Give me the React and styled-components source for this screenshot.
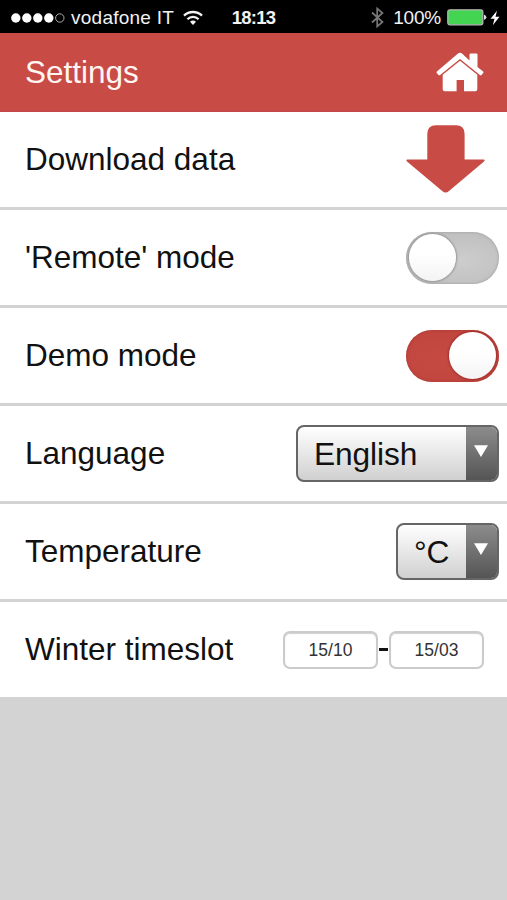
import React, { useState } from 'react';
import styled, { createGlobalStyle } from 'styled-components';

const GlobalStyle = createGlobalStyle`
  * {
    box-sizing: border-box;
  }

  body {
    margin: 0;
    background: #d3d3d3;
    font-family: 'Liberation Sans', Arial, sans-serif;
  }
`;

const Page = styled.div`
  height: 900px;
  overflow: hidden;
  background: #d3d3d3;
`;

const StatusBar = styled.div`
  display: grid;
  grid-template-columns: 1fr auto 1fr;
  align-items: center;
  height: 33px;
  padding: 2px 7px 0 11px;
  background: #000;
  color: #f2f2f2;
  font-size: 19px;
  line-height: 22px;
`;

const StatusGroup = styled.div`
  display: flex;
  align-items: center;
  justify-content: ${({ $end }) => ($end ? 'flex-end' : 'flex-start')};
`;

const Carrier = styled.span`
  margin: 0 9px 0 6px;
  letter-spacing: 0.25px;
`;

const Clock = styled.span`
  margin-right: 4px;
  font-weight: 700;
  font-size: 18.5px;
  letter-spacing: -0.8px;
`;

const Percent = styled.span`
  margin: 0 6px 0 9px;
  letter-spacing: -0.2px;
`;

const Header = styled.header`
  display: flex;
  align-items: center;
  justify-content: space-between;
  height: 79px;
  padding: 0 23px 0 25px;
  background: #c84b45;
  border-bottom: 1px solid #c5474a;
`;

const Title = styled.h1`
  margin: 0;
  font-size: 31.5px;
  font-weight: 400;
  color: #fff5f2;
`;

const List = styled.div`
  background: #fff;
`;

const Row = styled.div`
  display: flex;
  align-items: center;
  justify-content: space-between;
  height: 98px;
  padding: 0 ${({ $right }) => $right || 8}px 0 25px;
  border-bottom: 3px solid #d3d3d3;
`;

const Label = styled.span`
  font-size: 31.5px;
  color: #111;
`;

const Switch = styled.button`
  display: flex;
  align-items: center;
  justify-content: ${({ $on }) => ($on ? 'flex-end' : 'flex-start')};
  width: 93px;
  height: 52px;
  padding: 0 3px;
  border: 0;
  border-radius: 26px;
  background: ${({ $on }) =>
    $on
      ? 'radial-gradient(ellipse at 40% 55%, #c64a42, #bd443d)'
      : 'radial-gradient(ellipse at 60% 55%, #cdcdcd, #bababa)'};
  box-shadow: inset 0 0 3px ${({ $on }) => ($on ? '#a93732' : '#9b9b9b')};
`;

const Knob = styled.span`
  width: 47px;
  height: 47px;
  border-radius: 50%;
  background: linear-gradient(#fff 40%, #f4f4f4);
  box-shadow: 0 0 2px 1px ${({ $on }) => ($on ? '#a02f2b' : '#959595')};
`;

const Select = styled.div`
  display: flex;
  width: ${({ $width }) => $width}px;
  height: 57px;
  border: 2px solid #666;
  border-radius: 8px;
  overflow: hidden;
  background: linear-gradient(#fff, #d0d0d0);
`;

const SelectValue = styled.span`
  flex: 1;
  padding-left: 16px;
  font-size: 31.7px;
  letter-spacing: -0.1px;
  line-height: 54px;
  color: #111;
`;

const SelectArrow = styled.span`
  display: flex;
  justify-content: center;
  width: 31px;
  padding: 18px 2px 0 0;
  background: linear-gradient(#8c8c8c, #555);
`;

const Timeslot = styled.div`
  display: flex;
  align-items: center;
`;

const Dash = styled.span`
  width: 9px;
  height: 3px;
  margin: 0 1px 1px;
  background: #111;
`;

const DateInput = styled.input`
  width: 95px;
  height: 38px;
  padding: 2px 0 0;
  border: 2px solid #cbcbcb;
  border-radius: 7px;
  background: #fff;
  box-shadow: inset 0 1px 1px #d0d0d0;
  font-family: inherit;
  font-size: 17.5px;
  text-align: center;
  color: #333;
`;

const SignalDots = () => (
  <svg width='54' height='12' viewBox='0 0 54 12'>
    {[4.8, 15.8, 26.8, 37.8].map((cx) => (
      <circle key={cx} cx={cx} cy='6' r='4.7' fill='#fff' />
    ))}
    <circle cx='48.8' cy='6' r='4.2' fill='none' stroke='#aaa' />
  </svg>
);

const WifiIcon = () => (
  <svg width='20' height='16' viewBox='0 0 20 16' fill='none' stroke='#f2f2f2' strokeWidth='2.3'>
    <path d='M1 5.6a13 13 0 0 1 18 0' />
    <path d='M4.4 9.2a8 8 0 0 1 11.2 0' />
    <path d='M10 15l-3-3.2a4.4 4.4 0 0 1 6 0z' fill='#f2f2f2' stroke='none' />
  </svg>
);

const BluetoothIcon = () => (
  <svg width='13' height='21' viewBox='0 0 13 21' fill='none' stroke='#777' strokeWidth='1.7'>
    <path d='M1 5.5l10.5 9.5-5.3 4.5V1.5L11.5 6 1 15.5' />
  </svg>
);

const BatteryIcon = () => (
  <svg width='40' height='17' viewBox='0 0 40 17'>
    <rect x='0.8' y='0.8' width='35' height='15' rx='2' fill='#43d551' stroke='#b5b5b5' strokeWidth='1.3' />
    <path d='M37 5.5q2.4 1 2.4 2.8T37 11z' fill='#ddd' />
  </svg>
);

const Bolt = styled.svg`
  margin-left: 3px;
`;

const BoltIcon = () => (
  <Bolt width='10' height='16' viewBox='0 0 10 16'>
    <path d='M7 0.8L0.5 8.8h4L2.8 15.2 9.5 6.8h-4z' fill='#fff' />
  </Bolt>
);

const HomeIcon = () => (
  <svg width='48' height='40' viewBox='0 0 48 40' fill='#fff'>
    <path d='M33.5 8.5V2.6q0-1.2 1.2-1.2h5.6q1.2 0 1.2 1.2v12.3l5.6 4.6q.9.8.1 1.6l-1.6 1.9q-.8.8-1.7.1L24 6.9 4.1 23q-.9.7-1.7-.1L.8 21q-.8-.8.1-1.6L22 1.6q2-1.5 4 0z' />
    <path d='M24 8.8L41.3 22.8v14.4q0 2-2 2H28V28h-7.4v11.2H8.7q-2 0-2-2V22.8z' />
  </svg>
);

const DownloadIcon = () => (
  <svg width='79' height='70' viewBox='0 0 79 70' fill='#c84b45'>
    <path d='M21.3 34.4V9Q21.3 0.3 30 0.3H50Q58.6 0.3 58.6 9V34.4H77.5Q79.6 34.8 78 36.4L43 66Q39.6 69 36.2 66L1 36.4Q-0.6 34.8 1.5 34.4Z' />
  </svg>
);

const Triangle = () => (
  <svg width='14' height='12' viewBox='0 0 14 12'>
    <path d='M0 0.3h14L7 12z' fill='#fff' />
  </svg>
);

const Toggle = ({ initial, label }) => {
  const [on, setOn] = useState(initial);

  return (
    <Switch $on={on} onClick={() => setOn(!on)} aria-label={label}>
      <Knob $on={on} />
    </Switch>
  );
};

const Dropdown = ({ value, width }) => (
  <Select $width={width}>
    <SelectValue>{value}</SelectValue>
    <SelectArrow>
      <Triangle />
    </SelectArrow>
  </Select>
);

const App = () => {
  return (
    <>
      <GlobalStyle />
      <Page>
        <StatusBar>
          <StatusGroup>
            <SignalDots />
            <Carrier>vodafone IT</Carrier>
            <WifiIcon />
          </StatusGroup>
          <Clock>18:13</Clock>
          <StatusGroup $end>
            <BluetoothIcon />
            <Percent>100%</Percent>
            <BatteryIcon />
            <BoltIcon />
          </StatusGroup>
        </StatusBar>
        <Header>
          <Title>Settings</Title>
          <HomeIcon />
        </Header>
        <List>
          <Row $right={22}>
            <Label>Download data</Label>
            <DownloadIcon />
          </Row>
          <Row>
            <Label>'Remote' mode</Label>
            <Toggle initial={false} label='Remote mode' />
          </Row>
          <Row>
            <Label>Demo mode</Label>
            <Toggle initial label='Demo mode' />
          </Row>
          <Row>
            <Label>Language</Label>
            <Dropdown value='English' width={203} />
          </Row>
          <Row>
            <Label>Temperature</Label>
            <Dropdown value='°C' width={103} />
          </Row>
          <Row $right={23}>
            <Label>Winter timeslot</Label>
            <Timeslot>
              <DateInput defaultValue='15/10' />
              <Dash />
              <DateInput defaultValue='15/03' />
            </Timeslot>
          </Row>
        </List>
      </Page>
    </>
  );
};

export default App;
